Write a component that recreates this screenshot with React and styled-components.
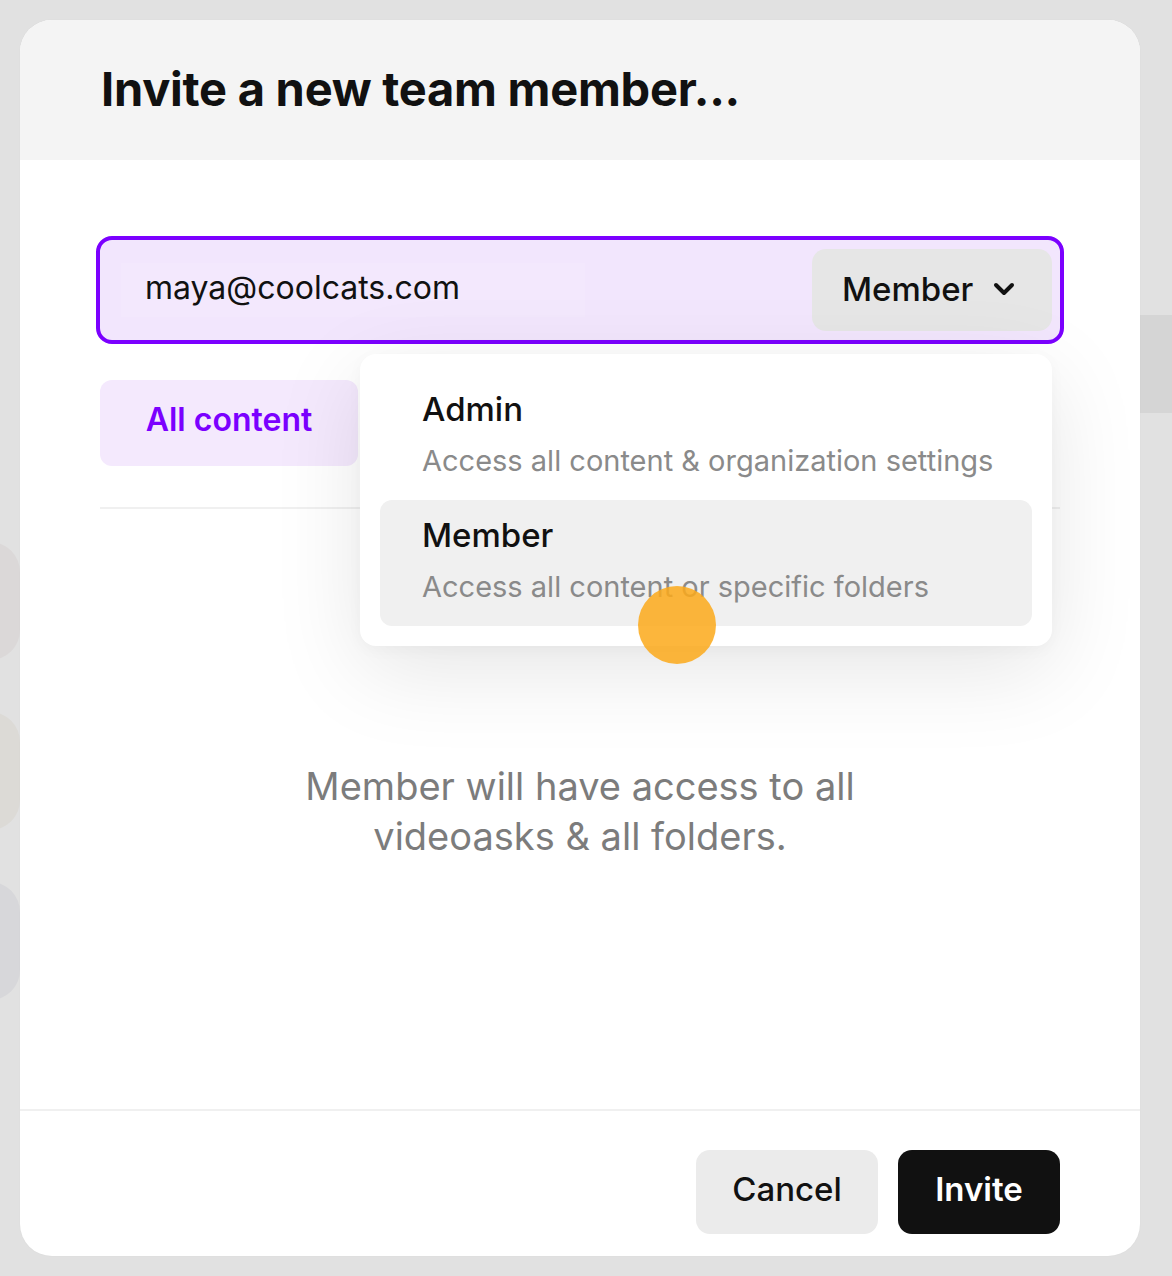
import React from "react";
import styled, { createGlobalStyle } from "styled-components";

const Global = createGlobalStyle`
  html, body { margin: 0; padding: 0; }
  body {
    background: #e1e1e1;
    font-family: "Inter", "Noto Sans", sans-serif;
    -webkit-font-smoothing: antialiased;
  }
  * { box-sizing: border-box; }
`;

const Page = styled.div`
  position: relative;
  width: 1172px;
  height: 1276px;
  padding: 20px 32px 20px 20px;
  overflow: hidden;
`;

const Ghost = styled.div`
  position: absolute;
  left: ${(p) => p.x}px;
  top: ${(p) => p.y}px;
  width: ${(p) => p.w}px;
  height: ${(p) => p.h}px;
  border-radius: ${(p) => p.r || 0}px;
  background: ${(p) => p.bg || "transparent"};
`;

const Modal = styled.div`
  position: relative;
  z-index: 1;
  width: 1120px;
  height: 1236px;
  background: #ffffff;
  border-radius: 32px;
  overflow: hidden;
  display: flex;
  flex-direction: column;
  box-shadow: 0 0 2px rgba(0, 0, 0, 0.04);
`;

const Header = styled.div`
  height: 140px;
  background: #f4f4f4;
  display: flex;
  align-items: center;
  padding: 0 0 4px 81px;
`;

const Title = styled.h1`
  margin: 0;
  font-size: 47px;
  font-weight: 700;
  letter-spacing: -0.25px;
  color: #111111;
`;

const Body = styled.div`
  flex: 1;
  padding: 76px 80px 0;
  display: flex;
  flex-direction: column;
  position: relative;
`;

const InputWrap = styled.div`
  position: relative;
  margin: 0 -4px;
`;

const InputBox = styled.div`
  height: 108px;
  border: 4px solid #7b00ff;
  border-radius: 16px;
  background: #f2e6fd;
  display: flex;
  align-items: center;
  justify-content: space-between;
  padding: 0 8px 0 21px;
`;

const EmailField = styled.div`
  width: 464px;
  height: 54px;
  padding: 0 0 5px 24px;
  display: flex;
  align-items: center;
  background: #f3e8fd;
  font-size: 32px;
  color: #111;
`;

const RoleButton = styled.div`
  width: 240px;
  height: 82px;
  border-radius: 14px;
  background: #e6e6e6;
  display: flex;
  align-items: center;
  gap: 20px;
  padding: 0 0 2px 30px;
  font-size: 33px;
  font-weight: 500;
  color: #111;
`;

const Tabs = styled.div`
  margin-top: 36px;
  display: flex;
  padding-bottom: 41px;
  border-bottom: 2px solid #f0f0f0;
`;

const Tab = styled.div`
  width: 258px;
  height: 86px;
  padding-bottom: 8px;
  border-radius: 12px;
  background: ${(p) => (p.active ? "#f4e9fd" : "transparent")};
  color: ${(p) => (p.active ? "#7b00ff" : "#555")};
  font-size: 32px;
  font-weight: 600;
  display: flex;
  align-items: center;
  justify-content: center;
`;

const Menu = styled.div`
  position: absolute;
  left: 340px;
  top: 194px;
  width: 692px;
  padding: 20px;
  background: #ffffff;
  border-radius: 16px;
  box-shadow: 0 24px 90px rgba(0, 0, 0, 0.1), 0 4px 16px rgba(0, 0, 0, 0.03);
  display: flex;
  flex-direction: column;
  z-index: 3;
`;

const MenuItem = styled.div`
  height: 126px;
  border-radius: 12px;
  background: ${(p) => (p.selected ? "#f0f0f0" : "transparent")};
  padding: 15px 0 0 42px;
  display: flex;
  flex-direction: column;
  gap: 12px;
`;

const ItemTitle = styled.div`
  font-size: 33px;
  font-weight: 500;
  color: #111;
  line-height: 40px;
`;

const ItemDesc = styled.div`
  font-size: 29px;
  color: #8a8a8a;
  line-height: 40px;
`;

const Cursor = styled.div`
  position: absolute;
  left: 618px;
  top: 426px;
  width: 78px;
  height: 78px;
  border-radius: 50%;
  background: rgba(252, 170, 28, 0.86);
  z-index: 4;
`;

const Description = styled.p`
  margin: 252px 0 0;
  text-align: center;
  font-size: 38px;
  line-height: 50px;
  color: #7c7c7c;
`;

const Footer = styled.div`
  height: 147px;
  border-top: 2px solid #f0f0f0;
  display: flex;
  justify-content: flex-end;
  align-items: flex-start;
  gap: 20px;
  padding: 39px 80px 0 0;
`;

const Button = styled.button`
  height: 84px;
  width: ${(p) => p.w}px;
  padding: 0 0 6px;
  border: none;
  border-radius: 14px;
  background: ${(p) => (p.primary ? "#111111" : "#ebebeb")};
  color: ${(p) => (p.primary ? "#ffffff" : "#111111")};
  font-family: inherit;
  font-size: 33px;
  font-weight: ${(p) => (p.primary ? 600 : 500)};
  cursor: pointer;
`;

const Chevron = () => (
  <svg width="22" height="14" viewBox="0 0 22 14" fill="none">
    <path d="M3 3l8 8 8-8" stroke="#111" strokeWidth="4" strokeLinecap="round" strokeLinejoin="round" />
  </svg>
);

export default function App() {
  return (
    <>
      <Global />
      <Page>
        <Ghost x={-40} y={542} w={60} h={118} r={59} bg="#dbd8d8" />
        <Ghost x={-40} y={712} w={60} h={118} r={30} bg="#dcdad6" />
        <Ghost x={-40} y={882} w={60} h={118} r={59} bg="#d7d7da" />
        <Ghost x={1140} y={315} w={40} h={98} bg="#d5d5d5" />
        <Modal>
          <Header>
            <Title>Invite a new team member...</Title>
          </Header>
          <Body>
            <InputWrap>
              <InputBox>
                <EmailField>maya@coolcats.com</EmailField>
                <RoleButton>
                  Member
                  <Chevron />
                </RoleButton>
              </InputBox>
            </InputWrap>
            <Tabs>
              <Tab active>All content</Tab>
            </Tabs>
            <Menu>
              <MenuItem>
                <ItemTitle>Admin</ItemTitle>
                <ItemDesc>Access all content &amp; organization settings</ItemDesc>
              </MenuItem>
              <MenuItem selected>
                <ItemTitle>Member</ItemTitle>
                <ItemDesc>Access all content or specific folders</ItemDesc>
              </MenuItem>
            </Menu>
            <Cursor />
            <Description>
              Member will have access to all
              <br />
              videoasks &amp; all folders.
            </Description>
          </Body>
          <Footer>
            <Button w={182}>Cancel</Button>
            <Button primary w={162}>Invite</Button>
          </Footer>
        </Modal>
      </Page>
    </>
  );
}
